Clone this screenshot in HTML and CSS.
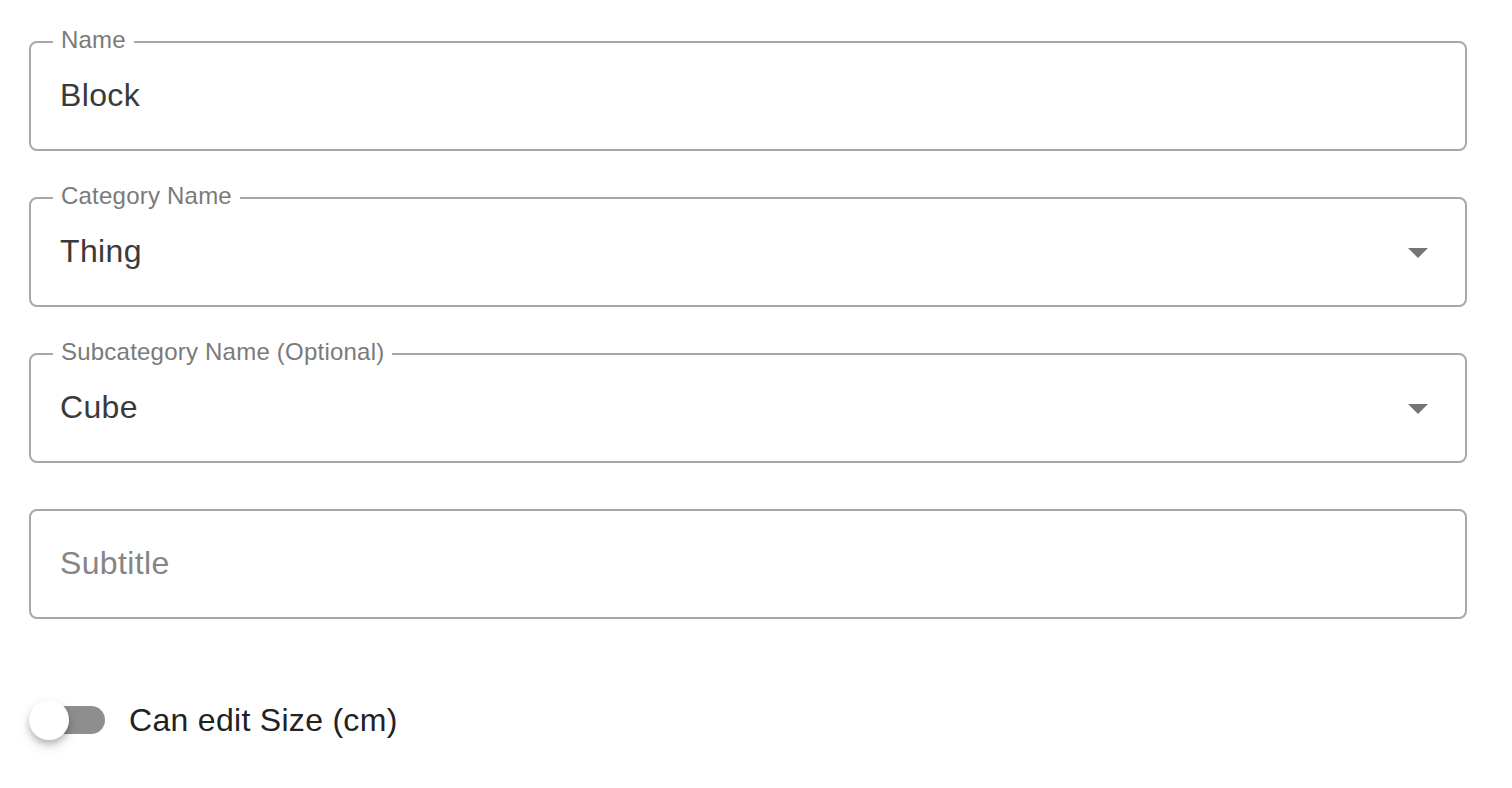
FILE: index.html
```html
<!DOCTYPE html>
<html>
<head>
<meta charset="utf-8">
<link rel="stylesheet" href="styles.css">
</head>
<body>
<form class="form">
  <div class="field">
    <span class="field-label">Name</span>
    <span class="field-value">Block</span>
  </div>
  <div class="field">
    <span class="field-label">Category Name</span>
    <span class="field-value">Thing</span>
    <svg class="arrow" width="20" height="10" viewBox="0 0 20 10"><path d="M0 0 L20 0 L10 10 Z" fill="#757575"/></svg>
  </div>
  <div class="field">
    <span class="field-label">Subcategory Name (Optional)</span>
    <span class="field-value">Cube</span>
    <svg class="arrow" width="20" height="10" viewBox="0 0 20 10"><path d="M0 0 L20 0 L10 10 Z" fill="#757575"/></svg>
  </div>
  <div class="field">
    <span class="field-placeholder">Subtitle</span>
  </div>
  <div class="switch-row">
    <span class="switch">
      <span class="switch-track"></span>
      <span class="switch-thumb"></span>
    </span>
    <span class="switch-label">Can edit Size (cm)</span>
  </div>
</form>
</body>
</html>
```
FILE: styles.css
```css
html, body {
  margin: 0;
  padding: 0;
  background: #ffffff;
  font-family: "Liberation Sans", Arial, Helvetica, sans-serif;
}

.form {
  display: flex;
  flex-direction: column;
  gap: 46px;
  padding: 41px 45px 40px 29px;
}

.field {
  position: relative;
  box-sizing: border-box;
  height: 110px;
  border: 2px solid #a8a8a8;
  border-radius: 8px;
  display: flex;
  align-items: center;
  padding: 0 29px 2px 29px;
}

.field-label {
  position: absolute;
  top: -16px;
  left: 22px;
  padding: 0 8px;
  background: #ffffff;
  font-size: 24px;
  line-height: 26px;
  letter-spacing: 0.22px;
  color: #7a7a7a;
}

.field-value {
  font-size: 32px;
  line-height: 40px;
  letter-spacing: 0.35px;
  color: #3a3a3a;
}

.field-placeholder {
  font-size: 32px;
  line-height: 40px;
  letter-spacing: 0.35px;
  color: #858585;
}

.arrow {
  margin-left: auto;
  margin-right: 8px;
  margin-top: 4px;
  display: block;
}

.switch-row {
  display: flex;
  align-items: center;
  gap: 24px;
  margin-top: 35px;
}

.switch {
  position: relative;
  width: 76px;
  height: 40px;
  flex: none;
}

.switch-track {
  position: absolute;
  left: 8px;
  top: 6px;
  width: 68px;
  height: 28px;
  border-radius: 14px;
  background: #8e8e8e;
}

.switch-thumb {
  position: absolute;
  left: 0;
  top: 0;
  width: 40px;
  height: 40px;
  border-radius: 50%;
  background: #ffffff;
  box-shadow: 0 4px 6px rgba(0,0,0,0.2), 0 6px 14px rgba(0,0,0,0.12);
}

.switch-label {
  font-size: 32px;
  line-height: 40px;
  letter-spacing: 0.3px;
  color: #222222;
}
```
